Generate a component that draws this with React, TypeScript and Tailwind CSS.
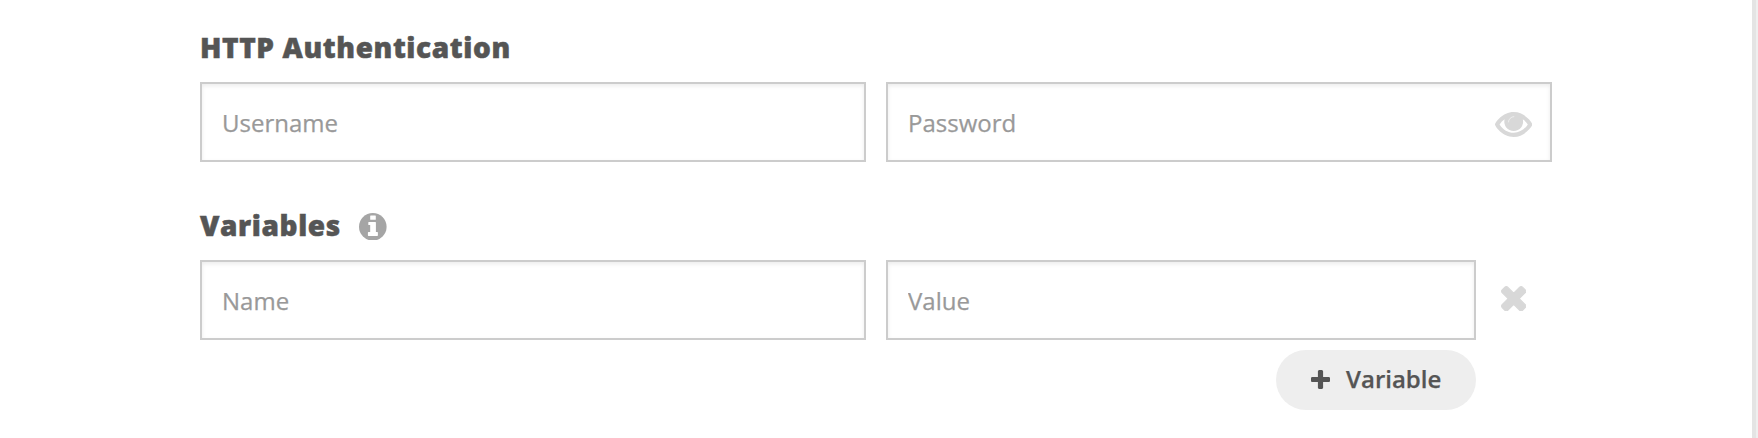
import type { ReactNode } from "react";

function EyeIcon() {
  return (
    <svg viewBox="0 0 37.4 25" className="block h-[25px] w-[37.4px]" aria-hidden="true">
      <path
        fill="currentColor"
        fillRule="evenodd"
        d="M0 12.5C0 10.8 7.5 0 18.7 0S37.4 10.8 37.4 12.5 29.9 25 18.7 25 0 14.2 0 12.5ZM9.6 7.3C7.6 8.7 5.9 10.4 4.6 12.4 8 17.8 13 20.7 18.7 20.7S29.4 17.8 32.8 12.4C31.5 10.4 29.8 8.7 27.8 7.3A9.4 9.4 0 1 1 9.6 7.3Z"
      />
      <path d="M13.4 10A5.6 5.6 0 0 1 18.8 4.6" fill="none" stroke="#fff" strokeOpacity="0.65" strokeWidth="0.8" strokeLinecap="round" />
    </svg>
  );
}

function InfoIcon() {
  return (
    <svg viewBox="0 0 27.6 27.6" className="mt-[3px] size-[27.6px] shrink-0 text-[#a5a5a5]" aria-hidden="true">
      <circle cx="13.8" cy="13.8" r="13.8" fill="currentColor" />
      <rect x="11.2" y="2.6" width="5.6" height="4.1" rx="0.5" fill="#fff" />
      <path
        fill="#fff"
        d="M9.8 8.9h6.6q.5 0 .5.5v9.5h1.4q.6 0 .6.6v2.8q0 .6-.6.6H9.5q-.6 0-.6-.6v-2.8q0-.6.6-.6h1.7v-6.8H9.8q-.5 0-.5-.5V9.4q0-.5.5-.5z"
      />
    </svg>
  );
}

function TimesIcon() {
  return (
    <svg viewBox="274 338 1244 1244" className="block size-[25.4px]" aria-hidden="true">
      <path
        fill="currentColor"
        stroke="currentColor"
        strokeWidth="56"
        d="M1490 1322q0 40-28 68l-136 136q-28 28-68 28t-68-28l-294-294-294 294q-28 28-68 28t-68-28l-136-136q-28-28-28-68t28-68l294-294-294-294q-28-28-28-68t28-68l136-136q28-28 68-28t68 28l294 294 294-294q28-28 68-28t68 28l136 136q28 28 28 68t-28 68l-294 294 294 294q28 28 28 68z"
      />
    </svg>
  );
}

function PlusIcon() {
  return (
    <svg viewBox="192 128 1408 1408" className="mr-4 mb-[2px] size-[19px] shrink-0" aria-hidden="true">
      <path
        fill="currentColor"
        d="M1600 736v192q0 40-28 68t-68 28h-416v416q0 40-28 68t-68 28h-192q-40 0-68-28t-28-68v-416h-416q-40 0-68-28t-28-68v-192q0-40 28-68t68-28h416v-416q0-40 28-68t68-28h192q40 0 68 28t28 68v416h416q40 0 68 28t28 68z"
      />
    </svg>
  );
}

function Heading({ children }: { children: ReactNode }) {
  return (
    <h2 className="text-[28px] leading-[38px] font-extrabold tracking-[0.6px] text-[#555] [-webkit-text-stroke:0.5px_#555]">
      {children}
    </h2>
  );
}

function Field({ placeholder, type = "text", className, children }: { placeholder: string; type?: string; className: string; children?: ReactNode }) {
  return (
    <div className={`flex h-20 items-center border-2 border-[#ccc] bg-white shadow-[inset_0_2px_4px_rgba(0,0,0,0.08)] ${className}`}>
      <input
        type={type}
        placeholder={placeholder}
        className="h-full min-w-0 flex-1 bg-transparent px-5 text-2xl text-[#555] outline-none placeholder:text-[#999] placeholder:[-webkit-text-stroke:0.25px_#999]"
      />
      {children}
    </div>
  );
}

export default function App() {
  return (
    <div className="flex h-[438px] w-[1758px] overflow-hidden bg-[#efefef] font-['Open_Sans',sans-serif]">
      <main className="w-[1756px] border-r-4 border-[#e4e4e4] bg-white pt-[28px] pl-[200px]">
        <section className="w-[1352px]">
          <Heading>HTTP Authentication</Heading>
          <div className="mt-4 flex gap-5">
            <Field placeholder="Username" className="w-[666px]" />
            <Field placeholder="Password" type="password" className="w-[666px]">
              <button type="button" aria-label="Show password" className="mt-[5px] mr-[18px] text-[#d8d8d8]">
                <EyeIcon />
              </button>
            </Field>
          </div>
        </section>
        <section className="mt-11 w-[1352px]">
          <div className="flex items-center gap-[18.5px]">
            <Heading>Variables</Heading>
            <InfoIcon />
          </div>
          <div className="mt-4 flex gap-5">
            <Field placeholder="Name" className="w-[666px]" />
            <Field placeholder="Value" className="w-[590px]" />
            <button type="button" aria-label="Remove variable" className="mt-[26px] ml-[5px] self-start text-[#d8d8d8]">
              <TimesIcon />
            </button>
          </div>
          <div className="mt-2.5 flex w-[1276px] justify-end">
            <button type="button" className="flex h-[60px] w-[200px] items-center rounded-full bg-[#eee] pl-[35px] text-2xl font-semibold text-[#555]">
              <PlusIcon />
              <span className="mb-[2px] [-webkit-text-stroke:0.25px_#555]">Variable</span>
            </button>
          </div>
        </section>
      </main>
    </div>
  );
}
